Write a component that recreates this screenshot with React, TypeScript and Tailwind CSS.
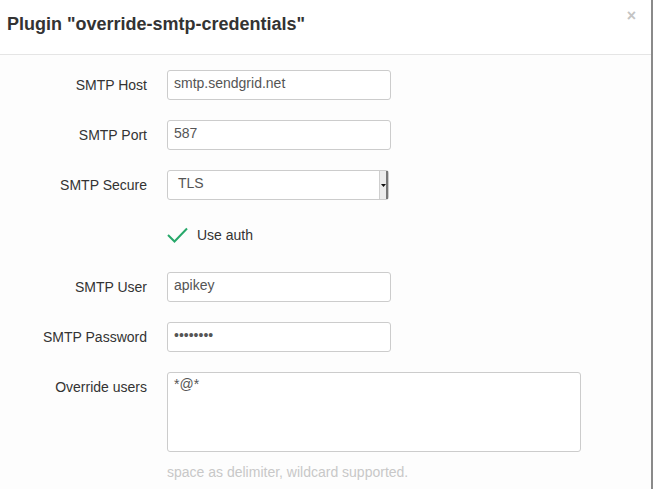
import { FC } from "react";

interface FieldProps {
  label: string;
  value: string;
}

const Field: FC<FieldProps> = ({ label, value }) => {
  return (
    <div className="flex items-start h-[30px] mb-[20px]">
      <label className="w-[147px] text-right text-[14px] leading-[30px] text-[#333]">{label}</label>
      <div className="ml-[20px] w-[224px] h-[30px] border border-[#ccc] rounded-[3px] bg-white px-[6px] pt-[2px] text-[14px] leading-[20px] text-[#555]">
        {value}
      </div>
    </div>
  );
};

const App: FC = () => {
  return (
    <div className="w-[654px] h-[489px] overflow-hidden bg-white font-['Liberation_Sans',Arial,sans-serif]">
      <div className="w-[653px] h-[489px] border-r-[2px] border-[#8a8a8a] bg-[#fdfdfd]">
        {/* header */}
        <div className="relative h-[55px] border-b border-[#e5e5e5] bg-white px-[7px] pt-[12px]">
          <h4 className="text-[18px] leading-[24px] font-bold text-[#333]">Plugin "override-smtp-credentials"</h4>
          <span className="absolute right-[15px] top-[6px] text-[16px] font-bold text-[#c4c4c4] leading-[20px]">×</span>
        </div>

        {/* body */}
        <div className="pt-[15px]">
          <Field label="SMTP Host" value="smtp.sendgrid.net" />
          <Field label="SMTP Port" value="587" />

          <div className="flex items-start h-[30px] mb-[20px]">
            <label className="w-[147px] text-right text-[14px] leading-[30px] text-[#333]">SMTP Secure</label>
            <div className="ml-[20px] w-[222px] h-[30px] border border-[#ccc] rounded-[3px] bg-white flex">
              <span className="flex-1 pl-[10px] pt-[2px] text-[14px] leading-[20px] text-[#555]">TLS</span>
              <div className="w-[9px] h-[28px] bg-[#ececec] border-l border-[#cfcfcf] border-r-[2px] border-r-[#777] flex items-center justify-center">
                <svg width="5" height="3" viewBox="0 0 5 3"><path d="M0 0h5L2.5 3z" fill="#111" /></svg>
              </div>
            </div>
          </div>

          <div className="flex items-center h-[30px] mb-[22px]">
            <div className="ml-[167px] w-[30px]">
              <svg width="21" height="16" viewBox="0 0 21 16">
                <path d="M1 8l6.5 6.5L20 1.5" fill="none" stroke="#27a86a" strokeWidth="2" />
              </svg>
            </div>
            <span className="text-[14px] text-[#333] leading-[20px]">Use auth</span>
          </div>

          <Field label="SMTP User" value="apikey" />
          <Field label="SMTP Password" value="••••••••" />

          <div className="flex items-start">
            <label className="w-[147px] text-right text-[14px] leading-[30px] text-[#333]">Override users</label>
            <div className="ml-[20px] w-[414px] h-[80px] border border-[#ccc] rounded-[3px] bg-white px-[6px] pt-[1px] text-[14px] leading-[20px] text-[#555]">
              *@*
            </div>
          </div>
          <p className="ml-[167px] mt-[10px] text-[14px] leading-[20px] text-[#c8c8c8]">space as delimiter, wildcard supported.</p>
        </div>
      </div>
    </div>
  );
};

export default App;
